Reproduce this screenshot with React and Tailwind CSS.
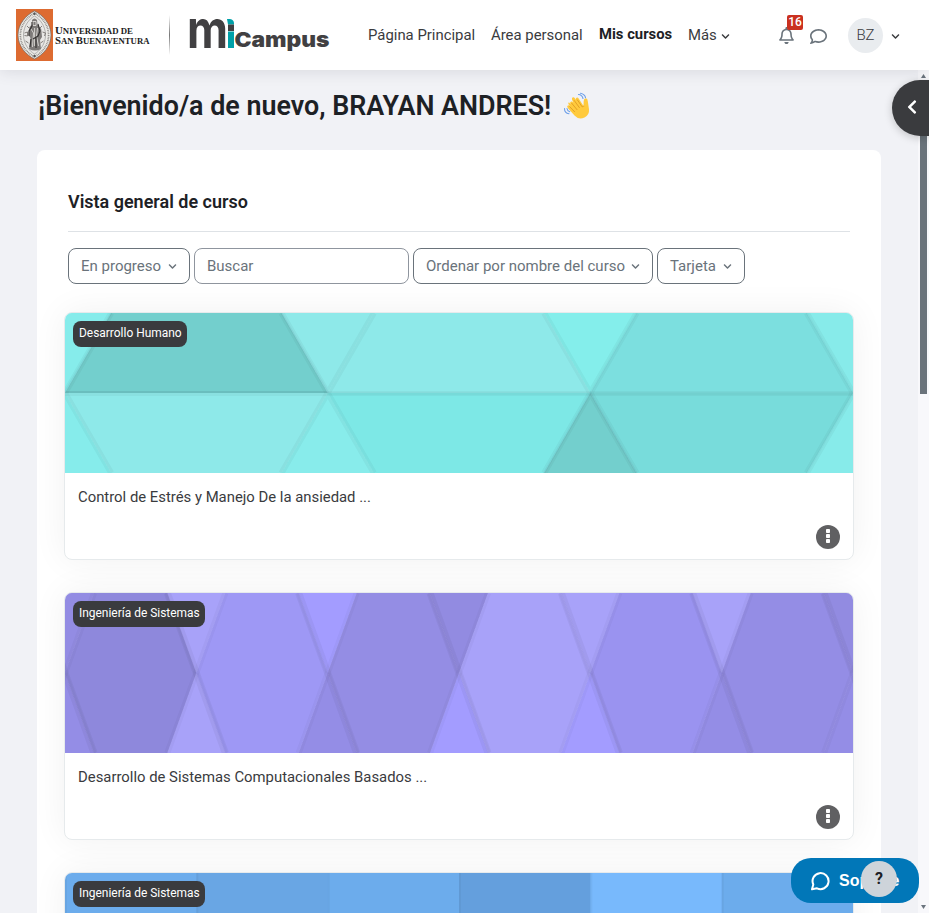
import React from "react";
import { FaChevronDown, FaChevronLeft } from "react-icons/fa";
import { FaRegBell, FaRegComment } from "react-icons/fa6";

function Crest() {
  return (
    <svg width="37" height="52" viewBox="0 0 37 52" className="block shrink-0">
      <rect width="37" height="52" fill="#dd6b31" />
      <path d="M18.5 2C27 6 35 15 35 26S27 46 18.5 50C10 46 2 37 2 26S10 6 18.5 2Z" fill="#ecebe7" stroke="#6f6a66" strokeWidth=".7" />
      <path d="M18.5 4.2C26 8 32.6 16 32.6 26S26 44 18.5 47.8C11 44 4.400 36 4.400 26S11 8 18.500 4.200Z" fill="none" stroke="#8a8784" strokeWidth="1.700" strokeDasharray=".9 .8" />
      <path d="M18.500 7C24 10 29.500 17 29.500 26S24 42 18.500 45C13 42 7.500 35 7.500 26S13 10 18.500 7Z" fill="#e8e7e5" stroke="#888" strokeWidth=".6" />
      <path d="M16 11q2.500-3 5 0l.6 5 3.600 4 .8 8-2 3 1 9q-6 3-12 0l1.500-11-2-3 1-8 3-3Z" fill="#7d7a78" />
      <path d="M17 12.500h3v4h-3zM15 20l2.500 4-1 14M21.500 19l-1 8 2 10M18.600 19v18" fill="none" stroke="#dcdad7" strokeWidth=".9" />
      <path d="M16 13v4l-3 5v5M22 15l2 7-2 5-5 3M15 30l-1 8M20 28v11" fill="none" stroke="#333130" strokeWidth="1.100" />
      <path d="M8.500 24l3-1v4l-3-.5M26.500 23l3 1-1 3M11 17l2 2M26 17l-2 2M9.500 32l3 2M27.500 32l-3 2" fill="none" stroke="#77736f" strokeWidth=".9" />
      <circle cx="18.500" cy="4.800" r="1.200" fill="#555" />
      <circle cx="18.500" cy="47" r="1.200" fill="#555" />
    </svg>
  );
}

function Brand() {
  return (
    <div className="flex items-center">
      <Crest />
      <svg width="97" height="52" viewBox="0 0 97 52" className="ml-0.5 block" fill="#1c1c1c" fontFamily="'Liberation Serif', serif" fontWeight="700">
        <text x="0" y="24.500" fontSize="10.500" textLength="78" lengthAdjust="spacingAndGlyphs">U<tspan fontSize="8.500">NIVERSIDAD DE</tspan></text>
        <text x="0" y="35" fontSize="10.500" textLength="94.500" lengthAdjust="spacingAndGlyphs">S<tspan fontSize="8.500">AN </tspan>B<tspan fontSize="8.500">UENAVENTURA</tspan></text>
      </svg>
      <div className="ml-[17px] h-10 w-px bg-linear-to-b from-transparent via-[#777] to-transparent" />
      <svg width="145" height="70" viewBox="-4 -15 145 70" className="ml-[15px] block" fontFamily="Inter, sans-serif">
        <text x="-2" y="33" fontSize="53" fontWeight="650" fill="#414042" textLength="41" lengthAdjust="spacingAndGlyphs">m</text>
        <path d="M38 4h3q4 .5 4 4.500v1h-6Z" fill="#00a0a8" />
        <path d="M39 9.500h6v6.500h-6z" fill="#414042" />
        <path d="M39 16.500h6V33h-6z" fill="#00a0a8" />
        <text x="45.500" y="32" fontSize="20.500" fontWeight="900" fill="#414042" textLength="95" lengthAdjust="spacingAndGlyphs">Campus</text>
      </svg>
    </div>
  );
}

function Header() {
  return (
    <header className="relative z-10 flex h-[70px] shrink-0 items-center bg-white pl-4 text-[#3a3b3e] shadow-[0_2px_14px_rgba(60,60,80,0.13)]">
      <Brand />
      <nav className="ml-[38px] flex gap-4 text-[14.900px] leading-5 font-[380]">
        <span className="w-[107px] whitespace-nowrap">Página Principal</span>
        <span className="w-[92px] whitespace-nowrap">Área personal</span>
        <span className="-mt-px w-[73px] text-[14.800px] font-bold whitespace-nowrap text-[#1d2125]">Mis cursos</span>
        <span className="flex items-center gap-1">Más <FaChevronDown className="mt-0.5 size-[9px]" /></span>
      </nav>
      <div className="absolute top-0 right-0 flex h-[70px] w-[151px] items-center">
        <div className="relative">
          <FaRegBell className="size-[17px] text-[#6a737b]" />
          <span className="absolute -top-[12px] left-[9px] flex h-[15px] w-4 items-center justify-center rounded-[2px] bg-[#ca3120] text-[12px] font-medium text-white">16</span>
        </div>
        <FaRegComment className="mt-0.5 ml-[15px] size-[17px] text-[#6a737b]" />
        <span className="ml-[21px] flex size-[35px] items-center justify-center rounded-full bg-[#e9ecef] text-[15px] font-[350]">BZ</span>
        <FaChevronDown className="mt-0.5 ml-2 size-[9px]" />
      </div>
    </header>
  );
}

function WavingHand() {
  return (
    <svg width="29" height="29" viewBox="0 0 29 29" className="block">
      <path d="M7.500 12q-1-2 .5-2.500 1.200-.4 2.300 1.200L9 7.500q-.5-2 1-2.300 1.200-.2 2 1.300l.8 1.200q-.3-2 1.200-2.200 1-.1 1.800 1.200l4.700 7.300.2-5q.1-2.700 2.200-2.700 1.700.1 1.900 3l1.200 8q.6 5.500-4.500 8.200-6 2.500-10-2l-6.700-7.500q-1.300-1.700 0-2.600 1-.6 2.200.6L5.800 12.700q-1.200-1.800.1-2.500Z" fill="#ffca3d" />
      <path d="M8.500 11l5.800 7M11 8.200l5.600 7.700M6.500 14.500l5.300 5.500M14.200 7.600l5 7.300q1.500-1 2-.6" fill="none" stroke="#df9b22" strokeWidth=".9" />
      <path d="M15.500 2.500q3.500.2 4.500 4M17.500 1.200q4.300.8 5 4.500M1.500 16.500q0 4.700 4.500 5.300M4 16.500q.3 2.500 2.800 3.200" fill="none" stroke="#6d9fe8" strokeWidth="1.100" strokeLinecap="round" />
    </svg>
  );
}

function DropdownButton({ label, className }) {
  return (
    <button className={`flex h-9 shrink-0 items-center justify-between rounded-lg border border-[#6a737b] px-3 text-[15px] whitespace-nowrap text-[#6a737b] ${className}`}>
      {label}
      <FaChevronDown className="size-[9px]" />
    </button>
  );
}

const SPAN = 788 / 3;
const TRIANGLES = {
  top: ["#73cfcd", "#8ee9e9", "#7cdfdf"],
  bottom: ["#8ee9e9", "#7de8e6", "#78dcdb"],
  topGap: ["#86eceb", "#8ee9e9", "#84eeeb", "#87ebea"],
  bottomGap: ["#86eceb", "#88eceb", "#73cfcd", "#87ebea"],
};

function TrianglePattern() {
  const d = 46.2;
  return (
    <svg width="788" height="160" viewBox="0 0 788 160" className="block">
      {[0, 1, 2, 3].map((i) => (
        <g key={i}>
          <path d={`M${i * SPAN} 80l${-d} -80h${2 * d}z`} fill={TRIANGLES.topGap[i]} stroke={TRIANGLES.topGap[i]} />
          <path d={`M${i * SPAN} 80l${-d} 80h${2 * d}z`} fill={TRIANGLES.bottomGap[i]} stroke={TRIANGLES.bottomGap[i]} />
        </g>
      ))}
      {[0, 1, 2].map((i) => (
        <g key={i}>
          <path d={`M${i * SPAN} 80h${SPAN}l${-d} -80H${i * SPAN + d}z`} fill={TRIANGLES.top[i]} />
          <path d={`M${i * SPAN} 80h${SPAN}l${-d} 80H${i * SPAN + d}z`} fill={TRIANGLES.bottom[i]} />
        </g>
      ))}
      <g fill="none" stroke="#222" strokeOpacity=".04">
        {[0, 1, 2, 3].map((i) => (
          <path key={i} d={`M${i * SPAN - d} 0l${2 * d} 160M${i * SPAN + d} 0l${-2 * d} 160`} strokeWidth="6" />
        ))}
        <path d="M0 80.500H788" strokeWidth="5" />
        <path d="M262 80.500H788" strokeWidth="3" strokeOpacity=".025" />
      </g>
      <path d="M46.200 0L0 79H262.700L216.500 0M479.100 160L525.300 80L571.500 160" fill="none" stroke="#235" strokeOpacity=".06" strokeWidth="2" />
      <path d="M571.500 0L525.300 80M741.800 0L788 80L741.800 160" fill="none" stroke="#235" strokeOpacity=".03" strokeWidth="2" />
    </svg>
  );
}

const STEP = 788 / 6;
const DIAMONDS = ["#8e88dc", "#9e98f5", "#948de4", "#a8a2f9", "#9a93f0", "#948de5"];
const TOP_WEDGES = ["#938ce3", "#a8a2f9", "#a39cff", "#928be1", "#a8a2f9", "#a8a2f9", "#928be1"];
const BOTTOM_WEDGES = ["#948de6", "#a8a2f9", "#948de6", "#a39cff", "#a39cff", "#948de6", "#948de6"];

function DiamondPattern() {
  const d = 29;
  return (
    <svg width="788" height="160" viewBox="0 0 788 160" className="block">
      {TOP_WEDGES.map((c, i) => (
        <g key={i}>
          <path d={`M${i * STEP} 80l${-d} -80h${2 * d}z`} fill={c} stroke={c} />
          <path d={`M${i * STEP} 80l${-d} 80h${2 * d}z`} fill={BOTTOM_WEDGES[i]} stroke={BOTTOM_WEDGES[i]} />
        </g>
      ))}
      {DIAMONDS.map((c, i) => (
        <path key={i} d={`M${i * STEP} 80l${d} -80H${(i + 1) * STEP - d}L${(i + 1) * STEP} 80l${-d} 80H${i * STEP + d}z`} fill={c} />
      ))}
      <g fill="none" stroke="#222">
        {TOP_WEDGES.map((c, i) => (
          <g key={i}>
            <path d={`M${i * STEP - d} 0l${2 * d} 160`} strokeOpacity=".05" strokeWidth="7" />
            <path d={`M${i * STEP + d} 0l${-2 * d} 160`} strokeOpacity=".03" strokeWidth="6" />
            <path d={`M${i * STEP - d - 1} 0l${d} 80M${i * STEP + 1} 80l${d} 80`} strokeOpacity=".025" strokeWidth="3" />
          </g>
        ))}
      </g>
    </svg>
  );
}

const STRIPES = ["#6cacec", "#69a6e4", "#6cacec", "#649fdd", "#78b9fc", "#6cacec"];

function StripePattern() {
  return (
    <svg width="788" height="160" viewBox="0 0 788 160" className="block">
      {STRIPES.map((c, i) => (
        <g key={i}>
          <rect x={i * STEP} width={STEP + 1} height="160" fill={c} />
          <rect x={i * STEP} width="2" height="160" fill="#222" fillOpacity=".045" />
        </g>
      ))}
    </svg>
  );
}

function CourseCard({ category, title, children }) {
  return (
    <article className="relative h-[248px] w-[790px] shrink-0 rounded-lg border border-[#e6eaec] bg-white shadow-[0_0_35px_rgba(0,0,0,0.06)]">
      <div className="h-40 overflow-hidden rounded-t-[7px]">{children}</div>
      <span className="absolute top-2 left-2 flex h-[26px] items-center rounded-lg bg-[#3a3b3e] pr-[5px] pb-0.5 pl-1.5 text-[11.950px] leading-[18px] font-[450] whitespace-nowrap text-white">{category}</span>
      <div className="flex h-[86px] flex-col justify-between pt-[14px] pr-[13px] pb-[10px] pl-[13px]">
        <h3 className="text-[14.860px] leading-5 text-[#3a3b3e]">{title}</h3>
        <button className="flex size-6 items-center justify-center self-end rounded-full bg-[#606062]">
          <svg width="4" height="14" viewBox="0 0 4 14" fill="white" className="-mt-0.5">
            <rect y="0" width="4" height="4" rx=".8" />
            <rect y="5" width="4" height="4" rx=".8" />
            <rect y="10" width="4" height="4" rx=".8" />
          </svg>
        </button>
      </div>
    </article>
  );
}

export default function App() {
  return (
    <div className="relative flex h-[913px] w-[929px] flex-col overflow-hidden bg-[#f1f2f6] font-[Roboto,sans-serif] text-[#1d2125]">
      <Header />
      <main className="flex shrink-0 flex-col pl-[37px]">
        <div className="flex h-20 items-center gap-3 pb-2">
          <h1 className="w-[514px] pl-px text-[26.860px] leading-8 font-semibold whitespace-nowrap">¡Bienvenido/a de nuevo, BRAYAN ANDRES!</h1>
          <WavingHand />
        </div>
        <section className="h-[900px] w-[844px] overflow-hidden rounded-t-lg bg-white">
          <div className="mx-[31px] flex h-[82px] items-end border-b border-[#dee2e6] pb-[17px]">
            <h2 className="text-[17.980px] leading-6 font-semibold">Vista general de curso</h2>
          </div>
          <div className="mx-[31px] mt-4 flex gap-1">
            <DropdownButton label="En progreso" className="w-[122px]" />
            <input placeholder="Buscar" className="h-9 w-[215px] rounded-lg border border-[#8f959e] px-3 text-[15px] placeholder:text-[#6a737b]" />
            <DropdownButton label="Ordenar por nombre del curso" className="w-[240px]" />
            <DropdownButton label="Tarjeta" className="w-[88px]" />
          </div>
          <div className="mx-[27px] mt-7 flex flex-col gap-8">
            <CourseCard category="Desarrollo Humano" title="Control de Estrés y Manejo De la ansiedad ..."><TrianglePattern /></CourseCard>
            <CourseCard category="Ingeniería de Sistemas" title="Desarrollo de Sistemas Computacionales Basados ..."><DiamondPattern /></CourseCard>
            <CourseCard category="Ingeniería de Sistemas" title=""><StripePattern /></CourseCard>
          </div>
        </section>
      </main>

      <div className="absolute top-[70px] right-0 flex h-[843px] w-[11px] flex-col items-center bg-[#f8f8fb]">
        <svg width="7" height="4" viewBox="0 0 7 4" className="mt-1 block fill-[#6b747e]"><path d="M3.500 0L6 4H1z" /></svg>
        <div className="mt-[6px] h-[310px] w-[7px] bg-[#6a737b]" />
        <svg width="7" height="4" viewBox="0 0 7 4" className="mt-auto mb-1 block fill-[#6b747e]"><path d="M1 0h5L3.500 4z" /></svg>
      </div>
      <button className="absolute top-20 right-0 z-20 flex h-14 w-[37px] items-center rounded-l-full bg-[#3a3b3e] pb-0.5 pl-3 text-white shadow-[0_2px_8px_rgba(0,0,0,0.2)]">
        <FaChevronLeft className="size-[16px]" />
      </button>
      <button className="absolute right-[10px] bottom-[10px] flex h-[45px] w-32 items-center rounded-[20px] bg-[#0177b8] pl-[19px] text-white">
        <svg width="20" height="20" viewBox="0 0 20 20" fill="none" stroke="white" strokeWidth="2" strokeLinejoin="round">
          <path d="M2 18.200l1.300-4.700A8 8 0 1 1 7 17.300z" />
        </svg>
        <span className="ml-[9px] font-['Liberation_Sans',sans-serif] text-[16px] font-bold">Soporte</span>
      </button>
      <button className="absolute right-8 bottom-4 flex size-9 items-center justify-center rounded-full bg-[#ced4da] text-[16px] font-bold">?</button>
    </div>
  );
}
